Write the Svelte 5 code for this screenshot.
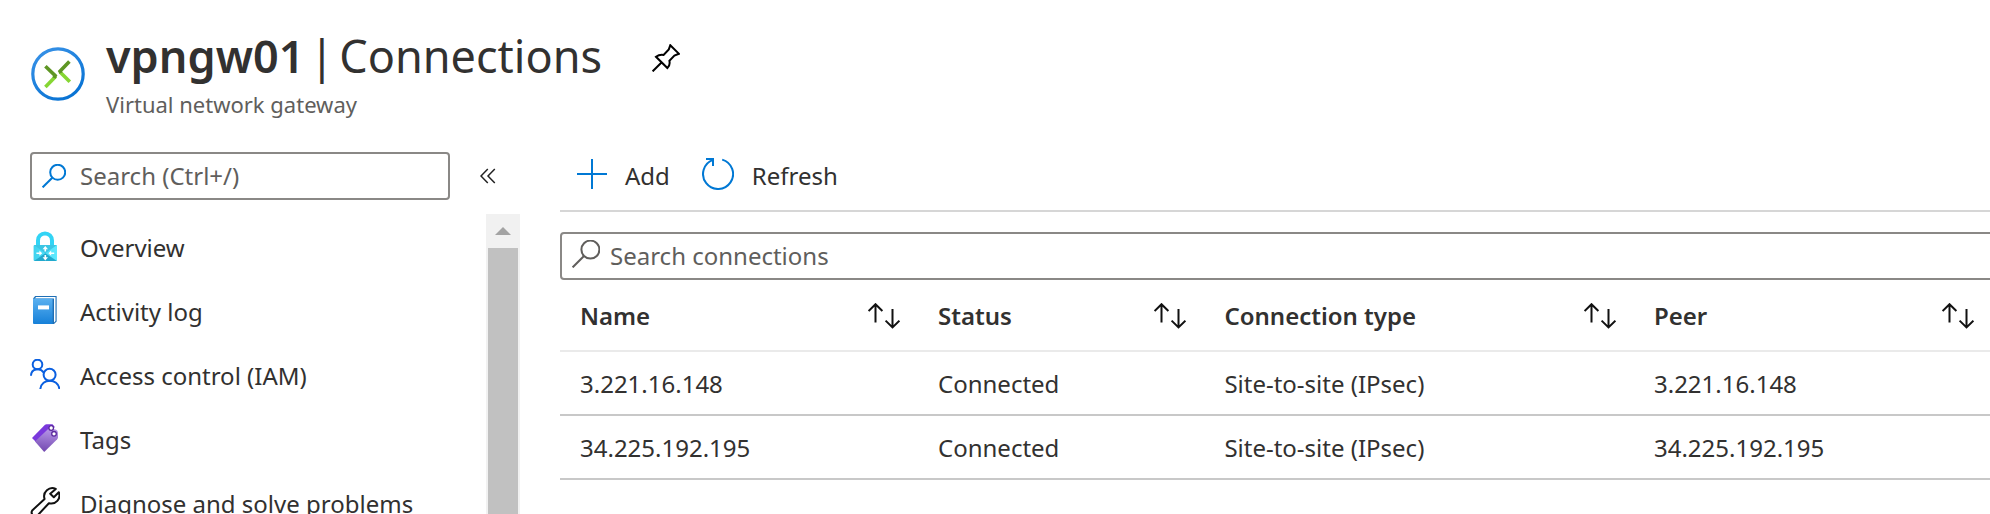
<script>
  const menu = [
    { id: 'overview', label: 'Overview' },
    { id: 'activity', label: 'Activity log' },
    { id: 'access', label: 'Access control (IAM)' },
    { id: 'tags', label: 'Tags' },
    { id: 'diagnose', label: 'Diagnose and solve problems' }
  ];
  const columns = ['Name', 'Status', 'Connection type', 'Peer'];
  const connections = [
    ['3.221.16.148', 'Connected', 'Site-to-site (IPsec)', '3.221.16.148'],
    ['34.225.192.195', 'Connected', 'Site-to-site (IPsec)', '34.225.192.195']
  ];
</script>

<div class="blade">
  <header class="head">
    <svg class="logo" viewBox="0 0 56 56" aria-hidden="true">
      <defs>
        <linearGradient id="ring" x1="0" y1="0" x2="0.6" y2="1">
          <stop offset="0" stop-color="#3a93e8" />
          <stop offset="1" stop-color="#0a74d4" />
        </linearGradient>
      </defs>
      <circle cx="28" cy="28" r="25.2" fill="none" stroke="url(#ring)" stroke-width="3.2" />
      <g fill="none" stroke-width="3.6">
        <path d="M15.4 41 25.8 30.2" stroke="#86d633" />
        <path d="M15.4 20.2 25.2 29.6 24 32" stroke="#5e9624" />
        <path d="M39.8 35.8 30 26" stroke="#86d633" />
        <path d="M39.4 15.4 30 25.2 31 27" stroke="#5e9624" />
      </g>
    </svg>
    <div class="titles">
      <div class="title-row">
        <h1><strong>vpngw01</strong> <span>|</span> <span>Connections</span></h1>
        <button class="pin" aria-label="Pin to dashboard">
          <svg viewBox="0 0 28 28" aria-hidden="true">
            <path d="M.6 27.4 10 18M18.3 1.2 27 9.8 22.4 11.6 17.4 16.8C18 19.5 17.6 22 15.4 24L4 12.8C6.5 11 9 10.6 11.6 11L16.8 5.4Z" />
          </svg>
        </button>
      </div>
      <p>Virtual network gateway</p>
    </div>
  </header>

  <div class="body">
    <aside>
      <div class="side-top">
        <label class="box">
          <svg class="find" viewBox="0 0 24 24" aria-hidden="true">
            <circle cx="15.7" cy="8.3" r="7.5" /><path d="M10.3 13.7.6 23.4" />
          </svg>
          <input type="text" placeholder="Search (Ctrl+/)" aria-label="Search menu" />
        </label>
        <button class="collapse" aria-label="Collapse menu">
          <svg viewBox="0 0 16 16" aria-hidden="true"><path d="M7.8 1 1 8 7.8 15M14.8 1 8 8 14.8 15" /></svg>
        </button>
      </div>
      <div class="side-main">
        <nav>
          {#each menu as item}
            <a href="#{item.id}">
              <svg viewBox="0 0 30 30" aria-hidden="true">
                {#if item.id === 'overview'}
                  <defs>
                    <linearGradient id="lk" x1="0" y1="0" x2="1" y2="0">
                      <stop offset="0" stop-color="#3fd2ee" /><stop offset="1" stop-color="#5eeaff" />
                    </linearGradient>
                  </defs>
                  <path d="M8 15V9.4a7 7 0 0 1 14 0V15" fill="none" stroke="#32d4f5" stroke-width="4" />
                  <rect x="3.6" y="14" width="23.4" height="16" rx="1" fill="url(#lk)" />
                  <path d="M4 14 15.3 22.2 27 14Z" fill="#3cc6e4" />
                  <path d="M4 30 15.3 22.2 27 30Z" fill="#22a9cd" />
                  <path d="M15.3 15 18 18.2H16.1V20.4H14.5V18.2H12.6ZM15.3 29.4 18 26.2H16.1V24H14.5V26.2H12.6ZM12.2 22.2 9.4 19.6V21.4H6.4V23H9.4V24.8ZM18.4 22.2 21.2 19.6V21.4H24.2V23H21.2V24.8Z" fill="#fff" />
                {:else if item.id === 'activity'}
                  <defs>
                    <linearGradient id="bk" x1="0" y1="0" x2="0" y2="1">
                      <stop offset="0" stop-color="#5ab0f0" /><stop offset="1" stop-color="#1680d8" />
                    </linearGradient>
                  </defs>
                  <path d="M3 3.4 5.2 1H26.6V26.6L24 29H4Z" fill="#1f6fb5" />
                  <path d="M5 3.4 6 2H25.5V26L24 27.6V3.6Z" fill="#fff" />
                  <path d="M3 3.6H22.6V29H4Q3 29 3 28Z" fill="url(#bk)" />
                  <rect x="8" y="10.4" width="11" height="4" fill="#fff" />
                {:else if item.id === 'access'}
                  <g fill="none" stroke="#0a5fe0" stroke-width="2">
                    <circle cx="7.5" cy="5.5" r="4.8" />
                    <circle cx="19.6" cy="15.8" r="6" />
                    <path d="M1 16.8C1 9 10.5 8.6 13.8 13.6M10.3 30C11.5 19 28 19 29.4 30" />
                  </g>
                {:else if item.id === 'tags'}
                  <defs>
                    <linearGradient id="tg" x1="0.6" y1="0" x2=".5" y2="1">
                      <stop offset="0" stop-color="#b796e8" /><stop offset="1" stop-color="#7349b0" />
                    </linearGradient>
                  </defs>
                  <path d="M2 15 15 1.8Q15.6 1.2 16.5 1.2H22.5L24.8 4 8.5 21.4Z" fill="#7a38dc" />
                  <path d="M5 18.6 18.4 5.8 24.8 6.2Q28 7 28 10V14.5Q28 15.4 27.2 16.2L14.2 29Z" fill="url(#tg)" />
                  <circle cx="21.2" cy="5" r="2.3" fill="#fff" stroke="#5a2a9c" stroke-width="1.3" />
                  <circle cx="24" cy="10.8" r="2.3" fill="#fff" stroke="#5a2a9c" stroke-width="1.3" />
                {:else}
                  <path d="M25.8 1.9A8.2 8.2 0 0 0 14.6 12L2.2 23.4A3.8 3.8 0 0 0 7.4 28.6L18.9 16.2A8.2 8.2 0 0 0 28.8 5.2L23.8 10.2 20.2 6.8Z" fill="none" stroke="#111" stroke-width="2" stroke-linejoin="round" />
                {/if}
              </svg>
              <span>{item.label}</span>
            </a>
          {/each}
        </nav>
        <div class="scroll" aria-hidden="true">
          <div class="up"><svg viewBox="0 0 16 8"><path d="M0 8 8 0 16 8Z" fill="#a3a3a3" /></svg></div>
          <div class="thumb"></div>
        </div>
      </div>
    </aside>

    <main>
      <div class="toolbar">
        <button>
          <svg class="plus" viewBox="0 0 30 30" aria-hidden="true"><path d="M15 0V30M0 15H30" /></svg>
          <span>Add</span>
        </button>
        <button>
          <svg class="cycle" viewBox="0 0 32 32" aria-hidden="true">
            <path d="M20.2 1.6A15 15 0 1 1 11 1.9M4 1H11V8" />
          </svg>
          <span>Refresh</span>
        </button>
      </div>
      <label class="box wide">
        <svg class="find" viewBox="0 0 28 28" aria-hidden="true">
          <circle cx="18.4" cy="9.6" r="9" /><path d="M12 16 .6 27.4" />
        </svg>
        <input type="text" placeholder="Search connections" aria-label="Search connections" />
      </label>
      <table>
        <thead>
          <tr>
            {#each columns as column}
              <th scope="col">
                <button>
                  <span>{column}</span>
                  <svg viewBox="0 0 32 26" aria-hidden="true">
                    <path d="M7.5 19.5V1M.6 8 7.5 1.2 14.4 8M24.5 6V24.5M17.6 17.6 24.5 24.4 31.4 17.6" />
                  </svg>
                </button>
              </th>
            {/each}
          </tr>
        </thead>
        <tbody>
          {#each connections as row}
            <tr>{#each row as cell}<td>{cell}</td>{/each}</tr>
          {/each}
        </tbody>
      </table>
    </main>
  </div>
</div>

<style>
  :global(body) {
    background: #fff;
    overflow: hidden;
  }
  .blade {
    display: flex;
    flex-direction: column;
    height: 100vh;
    overflow: hidden;
    color: #323130;
    font-family: "Noto Sans", "Open Sans", sans-serif;
    font-size: 24px;
    line-height: 32px;
  }
  .blade * {
    box-sizing: border-box;
  }
  svg {
    display: block;
    flex: none;
  }
  button,
  input {
    font: inherit;
    color: inherit;
    background: none;
    border: 0;
    padding: 0;
    margin: 0;
  }
  .head {
    display: flex;
    gap: 20px;
    padding: 28px 30px 0;
  }
  .logo {
    width: 56px;
    height: 56px;
    margin-top: 18px;
  }
  .title-row {
    display: flex;
    align-items: center;
    gap: 50px;
  }
  h1 {
    display: flex;
    gap: 5px;
    margin: 0;
    padding-bottom: 4px;
    font-size: 45px;
    line-height: 56px;
    font-weight: 400;
  }
  h1 strong {
    font-weight: 600;
  }
  .pin svg {
    width: 28px;
    height: 28px;
    fill: none;
    stroke: #000;
    stroke-width: 2;
  }
  .titles p {
    margin: 0;
    padding-bottom: 2px;
    font-size: 22px;
    color: #605e5c;
  }
  .body {
    display: flex;
    flex: 1;
    min-height: 0;
    padding-top: 30px;
  }
  aside {
    display: flex;
    flex-direction: column;
    flex: none;
    width: 520px;
    padding-left: 30px;
  }
  .side-top {
    display: flex;
    align-items: center;
    gap: 30px;
    padding-bottom: 14px;
  }
  .box {
    display: flex;
    align-items: center;
    gap: 14px;
    width: 420px;
    height: 48px;
    padding: 0 10px;
    border: 2px solid #8a8886;
    border-radius: 4px;
  }
  .box input {
    flex: 1;
    min-width: 0;
    outline: 0;
  }
  .box input::placeholder {
    color: #605e5c;
    opacity: 1;
  }
  .find {
    width: 24px;
    height: 24px;
    fill: none;
    stroke: #0078d4;
    stroke-width: 2;
  }
  .collapse svg {
    width: 16px;
    height: 16px;
    fill: none;
    stroke: #222;
    stroke-width: 1.5;
  }
  .side-main {
    display: flex;
    flex: 1;
    min-height: 0;
  }
  nav {
    flex: 1;
    min-width: 0;
    overflow: hidden;
  }
  nav a {
    display: flex;
    align-items: center;
    gap: 20px;
    height: 64px;
    color: inherit;
    text-decoration: none;
    white-space: nowrap;
  }
  nav a svg {
    width: 30px;
    height: 30px;
  }
  nav a span {
    padding-top: 4px;
  }
  .scroll {
    display: flex;
    flex-direction: column;
    width: 34px;
    padding: 0 2px;
    background: #f1f1f1;
  }
  .up {
    display: grid;
    place-items: center;
    height: 34px;
  }
  .up svg {
    width: 16px;
    height: 8px;
  }
  .thumb {
    flex: 1;
    background: #c1c1c1;
  }
  main {
    flex: 1;
    min-width: 0;
    margin: 0 -2px 0 40px;
  }
  .toolbar {
    display: flex;
    gap: 32px;
    height: 60px;
    padding: 0 17px 14px;
    border-bottom: 2px solid #d6d6d6;
  }
  .toolbar button {
    display: flex;
    align-items: center;
    gap: 18px;
  }
  .toolbar span {
    padding-top: 4px;
  }
  .toolbar svg {
    fill: none;
    stroke: #0078d4;
    stroke-width: 2;
  }
  .plus {
    width: 30px;
    height: 30px;
  }
  .cycle {
    width: 32px;
    height: 32px;
  }
  .wide {
    width: auto;
    gap: 10px;
    margin: 20px -4px 0 0;
  }
  .wide .find {
    width: 28px;
    height: 28px;
    margin-bottom: 4px;
    stroke: #605e5c;
  }
  table {
    width: 100%;
    table-layout: fixed;
    border-collapse: separate;
    border-spacing: 0;
  }
  th {
    width: 25%;
    height: 72px;
    padding: 2px 18px 0 20px;
    border-bottom: 2px solid #eaeaea;
    text-align: left;
    font-weight: 600;
  }
  th:nth-child(2) {
    width: 20%;
  }
  th:nth-child(3) {
    width: 30%;
  }
  th button {
    display: flex;
    align-items: center;
    justify-content: space-between;
    width: 100%;
  }
  th svg {
    width: 32px;
    height: 26px;
    fill: none;
    stroke: #111;
    stroke-width: 2;
  }
  td {
    height: 64px;
    padding: 2px 20px 0;
    border-bottom: 2px solid #c8c8c8;
  }
</style>
